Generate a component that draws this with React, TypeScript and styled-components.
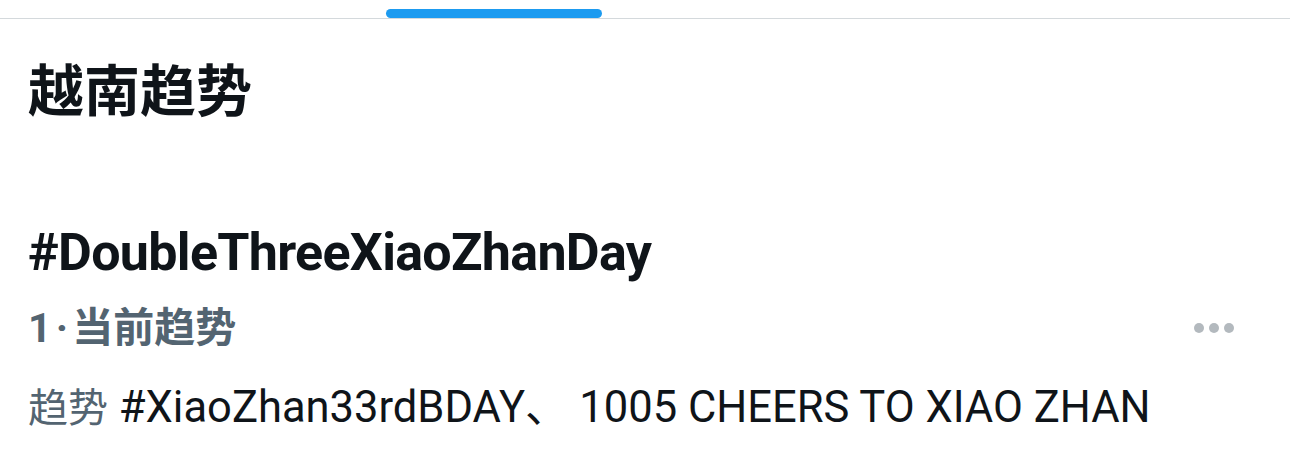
import React from 'react'
import styled, { createGlobalStyle } from 'styled-components'

const GlobalStyle = createGlobalStyle`
  html, body {
    margin: 0;
    padding: 0;
    background: #ffffff;
  }
  body {
    font-family: Roboto, "Noto Sans CJK SC", sans-serif;
    color: #0f1419;
  }
`

const Page = styled.div`
  width: 1290px;
  height: 459px;
  overflow: hidden;
  background: #ffffff;
`

const TabBar = styled.div`
  height: 18px;
  border-bottom: 1px solid #d4d9dc;
  display: flex;
  align-items: flex-end;
  padding-left: 386px;
`

const TabIndicator = styled.div`
  width: 216px;
  height: 9px;
  border-radius: 5px;
  background: #1d9bf0;
`

const Content = styled.div`
  padding: 0 28px;
`

const Title = styled.h1`
  margin: 0;
  padding-top: 36px;
  font-family: "Noto Sans CJK SC", sans-serif;
  font-size: 56px;
  line-height: 64px;
  font-weight: 700;
`

const TrendBlock = styled.div`
  margin-top: 106px;
  display: flex;
  flex-direction: column;
`

const Hashtag = styled.div`
  font-family: Roboto, sans-serif;
  font-size: 52px;
  line-height: 56px;
  font-weight: 700;
  letter-spacing: -0.7px;
`

const MetaRow = styled.div`
  display: flex;
  align-items: center;
  justify-content: space-between;
  margin-top: 23px;
`

const Meta = styled.span`
  font-family: Roboto, "Noto Sans CJK SC", sans-serif;
  font-size: 41px;
  line-height: 48px;
  font-weight: 700;
  word-spacing: -6px;
  color: #536471;
`

const MoreButton = styled.div`
  display: flex;
  gap: 5px;
  margin-right: 28px;
`

const Dot = styled.span`
  width: 10px;
  height: 10px;
  border-radius: 50%;
  background: #b3b9be;
`

const Related = styled.div`
  margin-top: 30px;
  font-family: Roboto, "Noto Sans CJK SC", sans-serif;
  font-size: 43.5px;
  line-height: 52px;
  white-space: nowrap;
  color: #0f1419;
`

const RelatedLabel = styled.span`
  font-size: 40px;
  color: #536471;
`

export default function App() {
  return (
    <Page>
      <GlobalStyle />
      <TabBar>
        <TabIndicator />
      </TabBar>
      <Content>
        <Title>越南趋势</Title>
        <TrendBlock>
          <Hashtag>#DoubleThreeXiaoZhanDay</Hashtag>
          <MetaRow>
            <Meta>1 · 当前趋势</Meta>
            <MoreButton>
              <Dot />
              <Dot />
              <Dot />
            </MoreButton>
          </MetaRow>
          <Related>
            <RelatedLabel>趋势</RelatedLabel> #XiaoZhan33rdBDAY、 1005 CHEERS TO XIAO ZHAN
          </Related>
        </TrendBlock>
      </Content>
    </Page>
  )
}
